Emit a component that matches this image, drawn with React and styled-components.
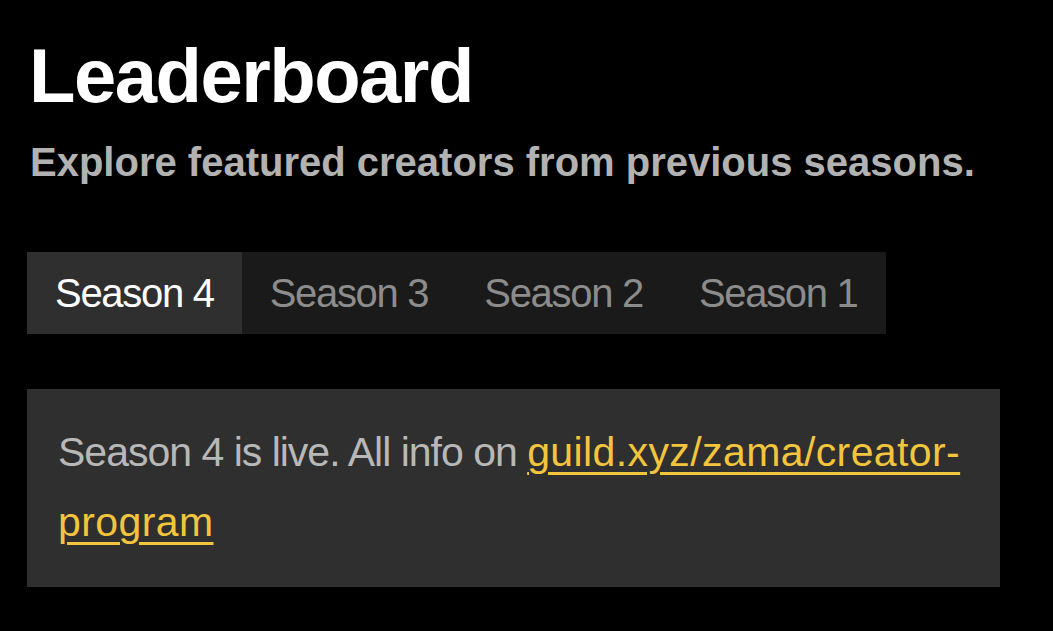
import React, { useState } from "react";
import styled, { createGlobalStyle } from "styled-components";

const GlobalStyle = createGlobalStyle`
    html, body {
        margin: 0;
        background: #000;
    }
    body {
        font-family: "Liberation Sans", Arial, sans-serif;
    }
`;

const Page = styled.div`
    display: flex;
    flex-direction: column;
    padding: 32px 27px 0 27px;
    width: 973px;
`;

const Title = styled.h1`
    margin: 0 0 0 2px;
    font-size: 76px;
    font-weight: 700;
    letter-spacing: -1.5px;
    line-height: 88px;
    color: #fff;
`;

const Subtitle = styled.p`
    margin: 18px 0 0 3px;
    font-size: 40px;
    font-weight: 700;
    line-height: 48px;
    color: #b2b2b2;
`;

const Tabs = styled.div`
    display: flex;
    align-self: flex-start;
    margin-top: 66px;
    background: #1a1a1a;
`;

const Tab = styled.button`
    border: 0;
    margin: 0;
    padding: 0 28px;
    height: 82px;
    font-family: inherit;
    font-size: 40px;
    letter-spacing: -1.3px;
    background: ${({ $active }) => ($active ? "#2f2f2f" : "transparent")};
    color: ${({ $active }) => ($active ? "#fff" : "#8c8c8c")};
    cursor: pointer;
`;

const Notice = styled.div`
    margin-top: 55px;
    padding: 28px 31px 30px 31px;
    background: #2f2f2f;
    font-size: 41px;
    letter-spacing: -1px;
    line-height: 70px;
    color: #b8b8b8;
`;

const Link = styled.a`
    color: #f2c53d;
    letter-spacing: 0.4px;
    text-decoration: underline;
    text-decoration-thickness: 3px;
    text-underline-offset: 6px;
`;

const seasons = ["Season 4", "Season 3", "Season 2", "Season 1"];

export default function App() {
    const [active, setActive] = useState("Season 4");

    return (
        <>
            <GlobalStyle />
            <Page>
                <Title>Leaderboard</Title>
                <Subtitle>Explore featured creators from previous seasons.</Subtitle>
                <Tabs>
                    {seasons.map(s => (
                        <Tab key={s} $active={s === active} onClick={() => setActive(s)}>
                            {s}
                        </Tab>
                    ))}
                </Tabs>
                <Notice>
                    Season 4 is live. All info on{" "}
                    <Link href="#">guild.xyz/zama/creator-program</Link>
                </Notice>
            </Page>
        </>
    );
}
